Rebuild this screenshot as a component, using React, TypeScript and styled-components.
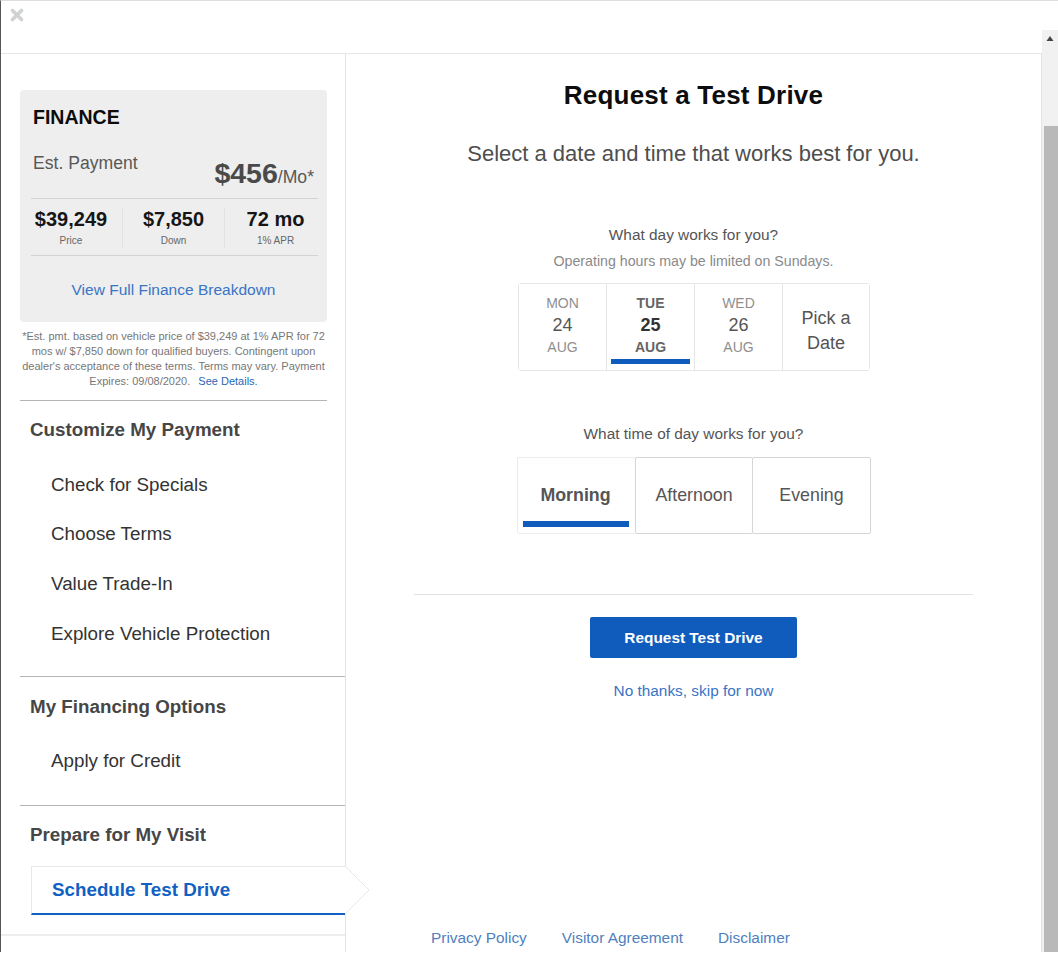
import React from 'react';
import styled, { createGlobalStyle } from 'styled-components';
import { X } from 'lucide-react';

const GlobalStyle = createGlobalStyle`
  html, body {
    margin: 0;
    padding: 0;
    background: #fff;
    overflow: hidden;
  }
  * {
    box-sizing: border-box;
  }
  body {
    font-family: "Liberation Sans", Arial, sans-serif;
  }
`;

const Frame = styled.div`
  display: flex;
  width: 1058px;
  height: 952px;
  overflow: hidden;
  border-top: 1px solid #dcdfdf;
  border-left: 1px solid #555;
`;

const Modal = styled.div`
  display: flex;
  flex-direction: column;
  flex: 1;
  min-width: 0;
`;

const TopBar = styled.div`
  display: flex;
  flex: none;
  height: 53px;
  padding: 5px 7px;
  color: #d0d3d4;
  border-bottom: 1px solid #e6e6e6;
`;

const Body = styled.div`
  display: flex;
  flex: 1;
  min-height: 0;
  border-right: 1px solid #e4e4e4;
`;

const Sidebar = styled.aside`
  flex: none;
  width: 345px;
  padding-top: 36px;
  border-right: 1px solid #e4e4e4;
`;

const FinanceCard = styled.section`
  width: 307px;
  height: 232px;
  margin-left: 19px;
  padding: 15px 9px 0 11px;
  background: #eeeeee;
  border-radius: 4px;
`;

const CardTitle = styled.div`
  padding-left: 2px;
  color: #0c0c0c;
  font-size: 19.5px;
  line-height: 24px;
  font-weight: 700;
`;

const PaymentRow = styled.div`
  display: flex;
  justify-content: space-between;
  height: 70px;
  padding: 22px 4px 0 2px;
  border-bottom: 1px solid #d2d3d3;
`;

const PaymentLabel = styled.span`
  color: #585858;
  font-size: 17.6px;
  line-height: 24px;
`;

const PaymentValue = styled.span`
  margin-top: 5px;
  color: #4a4a4a;
  font-size: 28.5px;
  line-height: 34px;
  font-weight: 700;
  white-space: nowrap;
`;

const PaymentUnit = styled.span`
  font-size: 17.6px;
  font-weight: 400;
  color: #585858;
`;

const Stats = styled.div`
  display: grid;
  grid-template-columns: 92px 102px 1fr;
  height: 57px;
  padding-top: 9px;
  border-bottom: 1px solid #d2d3d3;
`;

const Stat = styled.div`
  height: 40px;
  text-align: center;
  border-right: 1px solid #e2e2e2;

  &:first-child {
    padding-right: 11px;
  }

  &:last-child {
    padding-left: 8px;
    border-right: 0;
  }
`;

const StatValue = styled.div`
  color: #161616;
  font-size: 20px;
  line-height: 23px;
  font-weight: 700;
`;

const StatLabel = styled.div`
  margin-top: 4px;
  color: #666;
  font-size: 10px;
  line-height: 11px;
`;

const BreakdownLink = styled.a`
  display: block;
  padding: 25px 2px 0 0;
  color: #3a74c4;
  font-size: 15.5px;
  line-height: 18px;
  text-align: center;
`;

const Disclaimer = styled.p`
  width: 307px;
  height: 79px;
  margin: 0 0 0 19px;
  padding-top: 7px;
  color: #777;
  font-size: 11px;
  line-height: 15px;
  text-align: center;
  border-bottom: 1px solid #b5b5b5;
`;

const SeeDetails = styled.a`
  margin-left: 5px;
  color: #2a66b8;
`;

const NavHeading = styled.h3`
  margin: 0;
  padding: 17px 0 0 10px;
  color: #464646;
  font-size: 18.8px;
  line-height: 24px;
  font-weight: 700;
`;

const NavList = styled.div`
  padding-top: 18px;
`;

const NavGroup = styled.nav<{ $last?: boolean }>`
  margin-left: 19px;
  padding-bottom: 17px;
  border-bottom: 1px solid ${p => (p.$last ? 'transparent' : '#b5b5b5')};

  & + & {
    padding-bottom: 19px;
  }

  & + & ${NavHeading} {
    padding-top: 18px;
  }

  & + & ${NavList} {
    padding-top: 17px;
  }
`;

const NavItem = styled.a`
  display: block;
  padding: 13px 0 13px 31px;
  margin-top: -0.3px;
  color: #333;
  font-size: 18.8px;
  line-height: 24px;
`;

const ActiveItem = styled.a`
  position: relative;
  display: block;
  height: 49px;
  margin: 19px 0 -1px 11px;
  padding: 11px 0 0 20px;
  color: #1160c4;
  font-size: 18.8px;
  line-height: 24px;
  font-weight: 700;
  background: #fff;
  border-top: 1px solid #e8e8e8;
  border-left: 1px solid #e8e8e8;
  border-bottom: 2px solid #1160c4;
`;

const ActiveArrow = styled.svg`
  position: absolute;
  top: -1px;
  right: -25px;
  width: 25px;
  height: 48px;
`;

const SidebarFoot = styled.div`
  margin-left: -1px;
  border-top: 2px solid #eeeeee;
`;

const Main = styled.main`
  display: flex;
  flex-direction: column;
  align-items: center;
  flex: 1;
  min-width: 0;
  padding-top: 26px;
`;

const Title = styled.h1`
  margin: 0;
  color: #0d0d0d;
  font-size: 26px;
  line-height: 30px;
  font-weight: 700;
  letter-spacing: 0.2px;
`;

const Subtitle = styled.p`
  margin: 30px 0 0;
  color: #4e4e4e;
  font-size: 22px;
  line-height: 28px;
`;

const Question = styled.div<{ $gap: number }>`
  margin-top: ${p => p.$gap}px;
  color: #555;
  font-size: 15.4px;
  line-height: 18px;
`;

const Hint = styled.div`
  margin-top: 8px;
  color: #8a8a8a;
  font-size: 14.2px;
  line-height: 18px;
`;

const DayPicker = styled.div`
  display: grid;
  grid-template-columns: 88px 88px 88px 1fr;
  width: 352px;
  height: 88px;
  margin: 13px 0 0 1px;
  border: 1px solid #e6e6e6;
  border-radius: 3px;
`;

const DayCell = styled.button<{ $active?: boolean }>`
  position: relative;
  display: flex;
  flex-direction: column;
  align-items: center;
  padding: 10px 0 0;
  color: ${p => (p.$active ? '#666' : '#8f8f8f')};
  font: inherit;
  font-weight: ${p => (p.$active ? 700 : 400)};
  background: #fff;
  border: 0;
  border-right: 1px solid #e6e6e6;

  &:last-child {
    border-right: 0;
  }
`;

const DayName = styled.span`
  font-size: 14px;
  line-height: 18px;
`;

const DayNumber = styled.span<{ $active?: boolean }>`
  color: ${p => (p.$active ? '#333' : '#555')};
  font-size: 18px;
  line-height: 26px;
`;

const PickDate = styled.span`
  padding-top: 12px;
  color: #555;
  font-size: 18px;
  line-height: 25px;
`;

const Underline = styled.span<{ $height: number }>`
  position: absolute;
  left: 4px;
  right: 4px;
  bottom: 6px;
  height: ${p => p.$height}px;
  background: #0f5cbd;
`;

const TimePicker = styled.div`
  display: grid;
  grid-template-columns: 118px 117px 118px;
  margin: 14px 0 0 2px;
`;

const TimeCell = styled.button<{ $active?: boolean }>`
  position: relative;
  height: 77px;
  margin-left: -1px;
  padding: 1px ${p => (p.$active ? '8px' : '6px')} 1px 6px;
  color: #555;
  font-family: inherit;
  font-size: 17.8px;
  font-weight: ${p => (p.$active ? 700 : 400)};
  background: #fff;
  border: 1px solid ${p => (p.$active ? '#ececec' : '#d6d6d6')};
  border-radius: 2px;

  ${Underline} {
    left: 5px;
    right: 6px;
    bottom: 6px;
  }
`;

const Divider = styled.hr`
  width: 559px;
  margin: 60px 0 0;
  border: 0;
  border-top: 1px solid #e2e2e2;
`;

const PrimaryButton = styled.button`
  width: 207px;
  height: 41px;
  margin-top: 22px;
  color: #fff;
  font-family: inherit;
  font-size: 15.4px;
  font-weight: 700;
  background: #0f5cbd;
  border: 0;
  border-radius: 2px;
`;

const SkipLink = styled.a`
  margin-top: 24px;
  color: #3a74c4;
  font-size: 15.4px;
  line-height: 18px;
`;

const Footer = styled.footer`
  display: flex;
  align-self: flex-start;
  gap: 35px;
  margin-top: auto;
  padding: 0 0 5px 85px;
`;

const FooterLink = styled.a`
  color: #4f7fc0;
  font-size: 15.4px;
  line-height: 18px;
`;

const Scrollbar = styled.div`
  display: flex;
  flex-direction: column;
  flex: none;
  width: 16px;
  margin-top: 29px;
  background: #f1f1f1;
`;

const ScrollUp = styled.svg`
  flex: none;
  width: 16px;
  height: 17px;
`;

const ScrollThumb = styled.div`
  flex: 1;
  margin: 79px 0 0 2px;
  background: #b9b9b9;
`;

const days = [
  { name: 'MON', num: '24', month: 'AUG' },
  { name: 'TUE', num: '25', month: 'AUG', active: true },
  { name: 'WED', num: '26', month: 'AUG' },
];

const times = [
  { label: 'Morning', active: true },
  { label: 'Afternoon' },
  { label: 'Evening' },
];

export default function App() {
  return (
    <>
      <GlobalStyle />
      <Frame>
        <Modal>
          <TopBar>
            <X size={18} strokeWidth={5} />
          </TopBar>
          <Body>
            <Sidebar>
              <FinanceCard>
                <CardTitle>FINANCE</CardTitle>
                <PaymentRow>
                  <PaymentLabel>Est. Payment</PaymentLabel>
                  <PaymentValue>
                    $456<PaymentUnit>/Mo*</PaymentUnit>
                  </PaymentValue>
                </PaymentRow>
                <Stats>
                  <Stat>
                    <StatValue>$39,249</StatValue>
                    <StatLabel>Price</StatLabel>
                  </Stat>
                  <Stat>
                    <StatValue>$7,850</StatValue>
                    <StatLabel>Down</StatLabel>
                  </Stat>
                  <Stat>
                    <StatValue>72 mo</StatValue>
                    <StatLabel>1% APR</StatLabel>
                  </Stat>
                </Stats>
                <BreakdownLink>View Full Finance Breakdown</BreakdownLink>
              </FinanceCard>
              <Disclaimer>
                *Est. pmt. based on vehicle price of $39,249 at 1% APR for 72
                mos w/ $7,850 down for qualified buyers. Contingent upon
                dealer's acceptance of these terms. Terms may vary. Payment
                Expires: 09/08/2020. <SeeDetails>See Details.</SeeDetails>
              </Disclaimer>
              <NavGroup>
                <NavHeading>Customize My Payment</NavHeading>
                <NavList>
                  <NavItem>Check for Specials</NavItem>
                  <NavItem>Choose Terms</NavItem>
                  <NavItem>Value Trade-In</NavItem>
                  <NavItem>Explore Vehicle Protection</NavItem>
                </NavList>
              </NavGroup>
              <NavGroup>
                <NavHeading>My Financing Options</NavHeading>
                <NavList>
                  <NavItem>Apply for Credit</NavItem>
                </NavList>
              </NavGroup>
              <NavGroup $last>
                <NavHeading>Prepare for My Visit</NavHeading>
                <ActiveItem>
                  Schedule Test Drive
                  <ActiveArrow viewBox="0 0 25 48">
                    <path d="M0 0 L24 24 L0 48" fill="#fff" stroke="#e8e8e8" strokeWidth="1" />
                  </ActiveArrow>
                </ActiveItem>
              </NavGroup>
              <SidebarFoot />
            </Sidebar>
            <Main>
              <Title>Request a Test Drive</Title>
              <Subtitle>Select a date and time that works best for you.</Subtitle>
              <Question $gap={58}>What day works for you?</Question>
              <Hint>Operating hours may be limited on Sundays.</Hint>
              <DayPicker>
                {days.map(d => (
                  <DayCell key={d.name} $active={d.active}>
                    <DayName>{d.name}</DayName>
                    <DayNumber $active={d.active}>{d.num}</DayNumber>
                    <DayName>{d.month}</DayName>
                    {d.active && <Underline $height={5} />}
                  </DayCell>
                ))}
                <DayCell>
                  <PickDate>Pick a<br />Date</PickDate>
                </DayCell>
              </DayPicker>
              <Question $gap={54}>What time of day works for you?</Question>
              <TimePicker>
                {times.map(t => (
                  <TimeCell key={t.label} $active={t.active}>
                    {t.label}
                    {t.active && <Underline $height={6} />}
                  </TimeCell>
                ))}
              </TimePicker>
              <Divider />
              <PrimaryButton>Request Test Drive</PrimaryButton>
              <SkipLink>No thanks, skip for now</SkipLink>
              <Footer>
                <FooterLink>Privacy Policy</FooterLink>
                <FooterLink>Visitor Agreement</FooterLink>
                <FooterLink>Disclaimer</FooterLink>
              </Footer>
            </Main>
          </Body>
        </Modal>
        <Scrollbar>
          <ScrollUp viewBox="0 0 16 17">
            <path d="M4.5 11 L8 6 L11.5 11 Z" fill="#444" />
          </ScrollUp>
          <ScrollThumb />
        </Scrollbar>
      </Frame>
    </>
  );
}
